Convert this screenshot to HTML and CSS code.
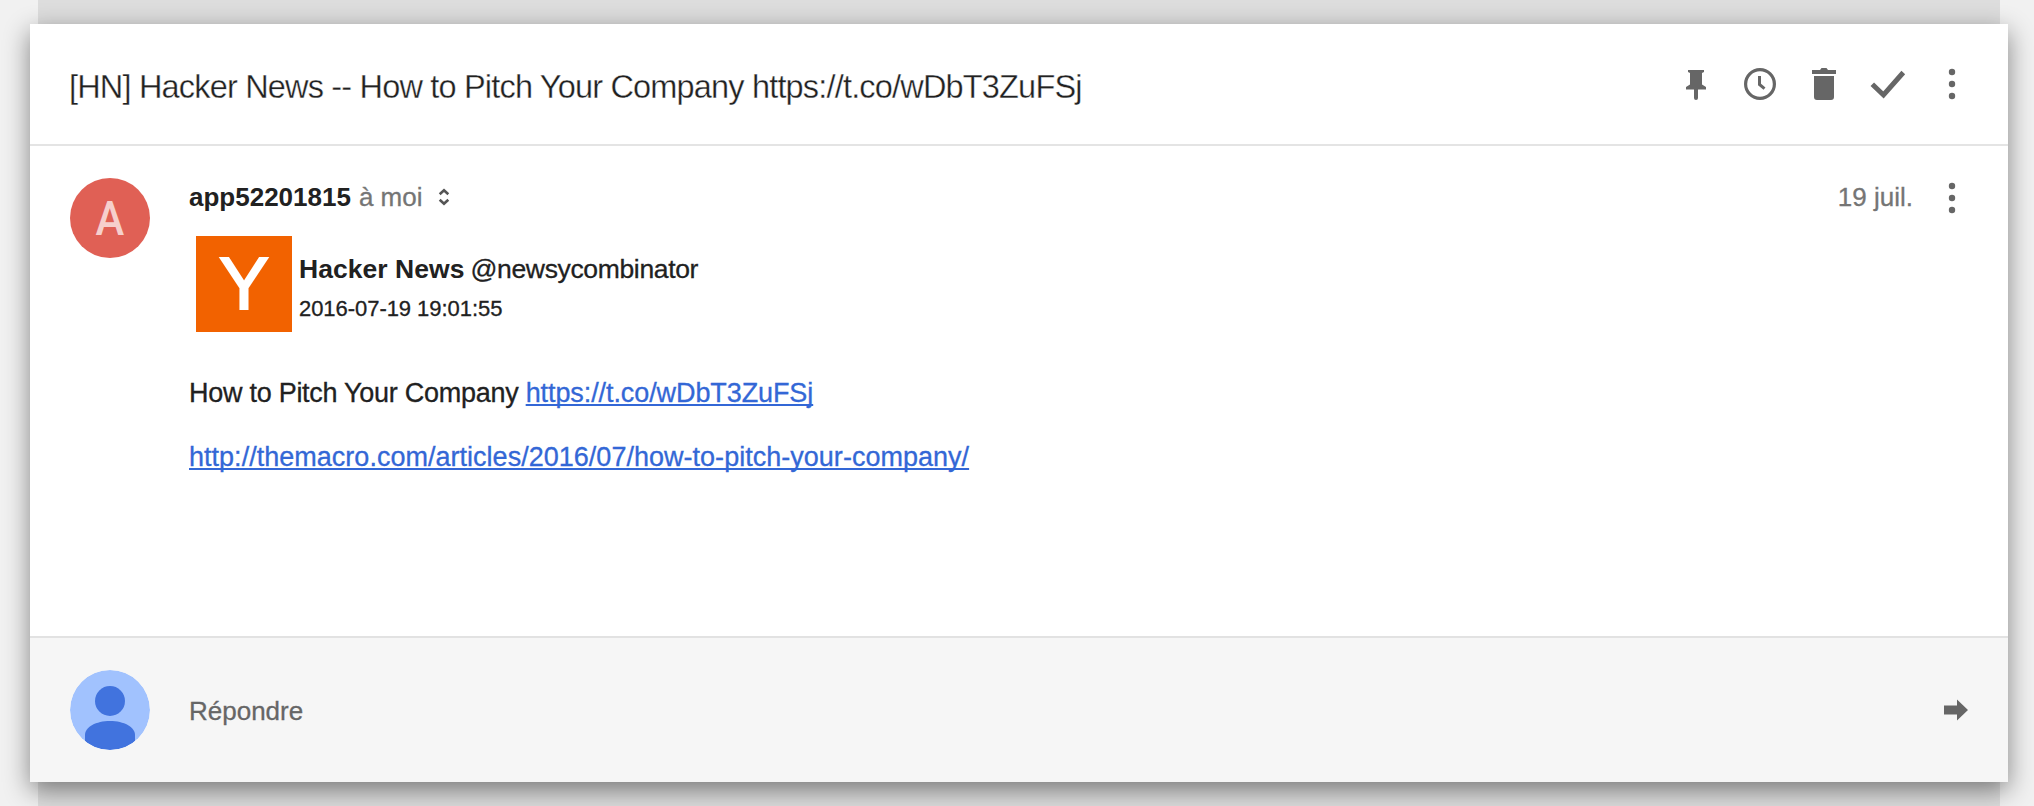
FILE: index.html
```html
<!DOCTYPE html>
<html lang="fr">
<head>
<meta charset="utf-8">
<title>Hacker News</title>
<link rel="stylesheet" href="styles.css">
</head>
<body>
<div class="backing">
  <main class="card">
    <header class="card-header">
      <h1 class="subject">[HN] Hacker News -- How to Pitch Your Company https://t.co/wDbT3ZuFSj</h1>
      <div class="actions">
        <svg class="icon" viewBox="0 0 40 40"><path d="M12 6h16v2l-2 1v11.500l4 2.500v2.500h-8V34q0 2-2 2t-2-2V25.500h-8V23l4-2.500V9l-2-1z"/></svg>
        <svg class="icon" viewBox="0 0 40 40"><circle cx="20" cy="20" r="14.400" fill="none" stroke="#666" stroke-width="3.200"/><path d="M19.500 12v8.500l5 4.200" fill="none" stroke="#666" stroke-width="3"/></svg>
        <svg class="icon" viewBox="0 0 40 40"><path d="M8 6h8l1.500-2h5L24 6h8v4H8zM10 12h20v21q0 3-3 3H13q-3 0-3-3z"/></svg>
        <svg class="icon" viewBox="0 0 40 40"><path d="M4.300 20.200 15.500 31 35.300 8.500" fill="none" stroke="#666" stroke-width="5"/></svg>
        <svg class="icon" viewBox="0 0 40 40"><circle cx="20" cy="8" r="3.200"/><circle cx="20" cy="20" r="3.200"/><circle cx="20" cy="32" r="3.200"/></svg>
      </div>
    </header>
    <article class="message">
      <div class="avatar avatar-letter"><span>A</span></div>
      <div class="content">
        <div class="meta">
          <strong class="sender">app52201815</strong>
          <span class="muted">à moi</span>
          <svg class="expand" viewBox="0 0 12 18"><path d="M1.700 6.200 6 2.200l4.300 4M1.700 11.800l4.300 4 4.300-4" fill="none" stroke="#555" stroke-width="2.600"/></svg>
          <span class="muted date">19 juil.</span>
          <svg class="icon" viewBox="0 0 40 40"><circle cx="20" cy="8" r="3.200"/><circle cx="20" cy="20" r="3.200"/><circle cx="20" cy="32" r="3.200"/></svg>
        </div>
        <div class="tweet">
          <div class="logo">Y</div>
          <div class="tweet-info">
            <div class="author"><strong>Hacker News</strong><span>@newsycombinator</span></div>
            <div class="time">2016-07-19 19:01:55</div>
          </div>
        </div>
        <p class="line"><span class="words">How to Pitch Your Company </span><a class="short" href="#">https://t.co/wDbT3ZuFSj</a></p>
        <p class="line"><a href="#">http://themacro.com/articles/2016/07/how-to-pitch-your-company/</a></p>
      </div>
    </article>
    <footer class="reply">
      <svg class="avatar" viewBox="0 0 80 80"><defs><clipPath id="disc"><circle cx="40" cy="40" r="40"/></clipPath></defs><g clip-path="url(#disc)"><path fill="#a1c2fe" d="M0 0h80v80H0z"/><circle cx="40" cy="31" r="15" fill="#4173de"/><path fill="#4173de" d="M15 80V65C15 57 26 51 40 51s25 6 25 14v15z"/></g></svg>
      <span class="reply-label">Répondre</span>
      <svg class="send" viewBox="0 0 24 22"><path d="M0 6.500h13V.500L24 11 13 21.500v-6H0z"/></svg>
    </footer>
  </main>
</div>
</body>
</html>
```
FILE: styles.css
```css
* { box-sizing: border-box; }
body {
  margin: 0;
  height: 806px;
  overflow: hidden;
  background: #f1f1f1;
  color: #212121;
  font: 26px/34px "Liberation Sans", Arial, sans-serif;
}
.backing {
  height: 806px;
  margin: 0 34px 0 38px;
  padding-top: 24px;
  background: #ddd;
}
.card {
  display: flex;
  flex-direction: column;
  height: 758px;
  margin: 0 -8px;
  background: #fff;
  box-shadow: 0 8px 24px rgba(0, 0, 0, .46);
}
.card-header {
  display: flex;
  justify-content: space-between;
  height: 122px;
  padding: 40px 36px 0 39px;
  border-bottom: 2px solid #e4e4e4;
}
.subject {
  margin: 0;
  font-size: 32.5px;
  line-height: 47px;
  font-weight: 400;
  letter-spacing: -.82px;
  white-space: nowrap;
  -webkit-text-stroke: .35px #fff;
}
.actions { display: flex; gap: 24px; }
.icon { width: 40px; height: 40px; flex: none; fill: #666; }
.message {
  display: flex;
  flex: 1;
  gap: 39px;
  padding: 32px 36px 0 40px;
}
.avatar { width: 80px; height: 80px; flex: none; border-radius: 50%; }
.avatar-letter {
  background: #e06055;
  color: #f6cfcc;
  font: 500 48px/82px Roboto, sans-serif;
  text-align: center;
}
.avatar-letter span { display: inline-block; transform: scaleX(.9); }
.content { flex: 1; }
.meta { display: flex; align-items: center; height: 40px; }
.sender, .muted { padding-bottom: 2px; }
.sender { margin-right: 8px; }
.muted { color: #757575; -webkit-text-stroke: .3px #757575; }
.expand { width: 12px; height: 18px; margin: -2px 0 0 16px; }
.date { margin: 0 19px 0 auto; }
.tweet { display: flex; gap: 7px; margin: 18px 0 0 7px; }
.logo {
  width: 96px;
  height: 96px;
  background: #f26200;
  color: #fff;
  font-size: 75px;
  line-height: 95px;
  text-align: center;
  -webkit-text-stroke: 2px #fff;
}
.tweet-info { padding-top: 16px; }
.author { display: flex; gap: 6px; font-size: 26.5px; }
.author strong { letter-spacing: .05px; }
.author span { letter-spacing: -.35px; -webkit-text-stroke: .3px #212121; }
.time { margin-top: 6px; font-size: 22px; letter-spacing: -.05px; -webkit-text-stroke: .3px #212121; }
.line { margin: 0; padding-top: 30px; font-size: 27px; -webkit-text-stroke: .3px; }
.tweet + .line { padding-top: 44px; }
.words { letter-spacing: -.27px; }
.short { letter-spacing: -.09px; }
a {
  color: #3367d6;
  text-decoration-thickness: 2px;
  text-underline-offset: 2px;
  text-decoration-skip-ink: none;
}
.line > a:only-child { letter-spacing: .02px; }
.reply {
  display: flex;
  align-items: center;
  height: 146px;
  padding: 0 40px;
  border-top: 2px solid #e2e2e2;
  background: #f6f6f6;
}
.reply-label { margin: 2px 0 0 39px; color: #666; -webkit-text-stroke: .3px #666; }
.send { width: 24px; height: 22px; margin-left: auto; margin-top: -1px; fill: #666; }
```
